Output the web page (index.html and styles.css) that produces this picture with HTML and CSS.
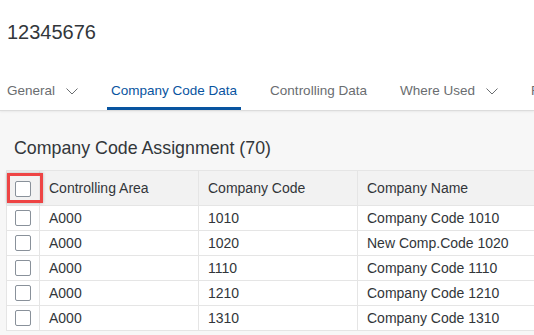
FILE: index.html
```html
<!DOCTYPE html>
<html lang="en">
<head>
    <meta charset="UTF-8">
    <meta name="viewport" content="width=device-width, initial-scale=1.0">
    <title>Cost Center 12345676</title>
    <link rel="stylesheet" href="styles.css">
</head>
<body>
    <header class="page-header">
        <h1 class="object-title">12345676</h1>

        <nav class="tab-bar">
            <a href="#general" class="tab">General
                <svg class="chevron" width="12" height="7" viewBox="0 0 12 7"><polyline points="0.5,0.5 6,6 11.5,0.5" fill="none" stroke="#6a6d70" stroke-width="1"/></svg>
            </a>
            <a href="#company-code" class="tab tab-active">Company Code Data</a>
            <a href="#controlling" class="tab">Controlling Data</a>
            <a href="#where-used" class="tab">Where Used
                <svg class="chevron" width="12" height="7" viewBox="0 0 12 7"><polyline points="0.5,0.5 6,6 11.5,0.5" fill="none" stroke="#6a6d70" stroke-width="1"/></svg>
            </a>
            <a href="#more" class="tab">Further Data</a>
        </nav>
    </header>

    <section id="company-code" class="section">
        <h2 class="section-title">Company Code Assignment (70)</h2>

        <div class="grid-table">
            <div class="grid-row grid-head">
                <div class="cell cell-select">
                    <span class="checkbox"></span>
                    <span class="highlight"></span>
                </div>
                <div class="cell">Controlling Area</div>
                <div class="cell">Company Code</div>
                <div class="cell">Company Name</div>
                <div class="cell"></div>
            </div>
            <div class="grid-row">
                <div class="cell cell-select"><span class="checkbox"></span></div>
                <div class="cell">A000</div>
                <div class="cell">1010</div>
                <div class="cell">Company Code 1010</div>
                <div class="cell"></div>
            </div>
            <div class="grid-row">
                <div class="cell cell-select"><span class="checkbox"></span></div>
                <div class="cell">A000</div>
                <div class="cell">1020</div>
                <div class="cell">New Comp.Code 1020</div>
                <div class="cell"></div>
            </div>
            <div class="grid-row">
                <div class="cell cell-select"><span class="checkbox"></span></div>
                <div class="cell">A000</div>
                <div class="cell">1110</div>
                <div class="cell">Company Code 1110</div>
                <div class="cell"></div>
            </div>
            <div class="grid-row">
                <div class="cell cell-select"><span class="checkbox"></span></div>
                <div class="cell">A000</div>
                <div class="cell">1210</div>
                <div class="cell">Company Code 1210</div>
                <div class="cell"></div>
            </div>
            <div class="grid-row">
                <div class="cell cell-select"><span class="checkbox"></span></div>
                <div class="cell">A000</div>
                <div class="cell">1310</div>
                <div class="cell">Company Code 1310</div>
                <div class="cell"></div>
            </div>
        </div>
    </section>
</body>
</html>
```

FILE: styles.css
```css
body {
    font-family: 'Liberation Sans', Arial, sans-serif;
    background-color: #f7f7f7;
    color: #32363a;
    margin: 0;
    padding: 0;
    overflow: hidden;
}

.page-header {
    background-color: #fff;
    border-bottom: 1px solid #dcdcdc;
    box-shadow: 0 1px 2px rgba(0, 0, 0, 0.06);
}

.object-title {
    margin: 0;
    padding: 20px 0 0 7px;
    font-size: 20px;
    font-weight: normal;
    line-height: 24px;
    color: #32363a;
}

.tab-bar {
    display: flex;
    gap: 25px;
    padding: 39px 0 0 3px;
    white-space: nowrap;
}

.tab {
    display: flex;
    align-items: center;
    gap: 11px;
    padding: 0 4px 8px;
    border-bottom: 3px solid transparent;
    font-size: 13.5px;
    line-height: 16px;
    color: #6a6d70;
    text-decoration: none;
}

.tab-active {
    color: #0854a0;
    border-bottom-color: #0854a0;
}

.chevron {
    display: block;
    margin-top: 1px;
}

.section {
    padding: 26px 0 0 6px;
}

.section-title {
    margin: 0 0 11px;
    padding-left: 8px;
    font-size: 17.8px;
    font-weight: normal;
    line-height: 22px;
    color: #32363a;
}

.grid-table {
    width: 620px;
    border-top: 1px solid #e5e5e5;
    border-left: 1px solid #e5e5e5;
    background-color: #fff;
}

.grid-row {
    display: grid;
    grid-template-columns: 33px 159px 159px 190px 1fr;
    height: 25px;
    border-bottom: 1px solid #e5e5e5;
    box-sizing: border-box;
}

.grid-head {
    height: 35px;
    background-color: #f2f2f2;
}

.cell {
    display: flex;
    align-items: center;
    padding: 0 9px;
    border-right: 1px solid #e5e5e5;
    font-size: 14px;
    white-space: nowrap;
}

.grid-row .cell:last-child {
    border-right: none;
}

.cell-select {
    position: relative;
    justify-content: center;
    padding: 0;
}

.checkbox {
    display: block;
    width: 16px;
    height: 16px;
    border: 1px solid #89919a;
    border-radius: 2px;
    background-color: #fff;
    box-sizing: border-box;
}

.grid-head .checkbox {
    margin-top: 2px;
}

.highlight {
    position: absolute;
    left: 0;
    top: 2px;
    width: 36px;
    height: 30px;
    border: 3px solid #ee4444;
    box-sizing: border-box;
    box-shadow: 0 0 3px rgba(0, 0, 0, 0.25);
}
```
